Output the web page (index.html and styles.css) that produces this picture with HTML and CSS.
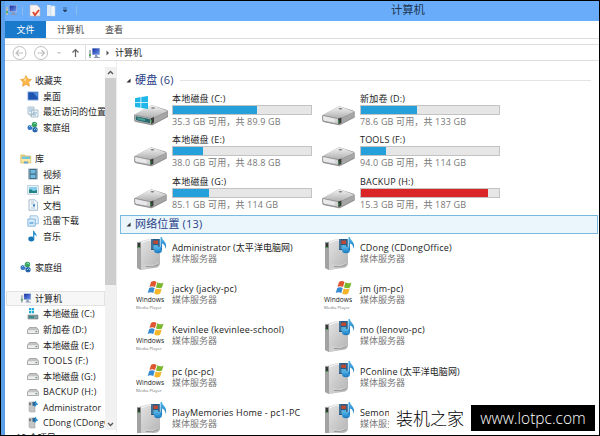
FILE: index.html
```html
<!DOCTYPE html>
<html lang="zh-CN">
<head>
<meta charset="utf-8">
<title>计算机</title>
<link rel="stylesheet" href="styles.css">
</head>
<body>
<svg width="0" height="0" class="defs">
  <defs>
    <linearGradient id="metal" x1="0" y1="0" x2="0" y2="1"><stop offset="0" stop-color="#f2f2f2"/><stop offset="1" stop-color="#adadad"/></linearGradient>
    <linearGradient id="front" x1="0" y1="0" x2="1" y2="1"><stop offset="0" stop-color="#fafafa"/><stop offset="1" stop-color="#c2c2c2"/></linearGradient>
    <linearGradient id="tower" x1="0" y1="0" x2="1" y2="1"><stop offset="0" stop-color="#e8e8e8"/><stop offset="1" stop-color="#b2b2b2"/></linearGradient>
    <linearGradient id="screen" x1="0" y1="0" x2="1" y2="1"><stop offset="0" stop-color="#122c9d"/><stop offset="1" stop-color="#729af0"/></linearGradient>
    <linearGradient id="bluenote" x1="0" y1="0" x2="0" y2="1"><stop offset="0" stop-color="#54b9ec"/><stop offset="1" stop-color="#1876bd"/></linearGradient>
  </defs>
  <symbol id="pc" viewBox="0 0 13 12"><path d="M1 3h2v8H1z" fill="#aebac0"/><path d="M1 7h2v2H1z" fill="#5aa95c"/><path d="M4 1h8v7H4z" fill="#c0cde3"/><path d="M4.500 1.500h7v6h-7z" fill="url(#screen)"/><path d="M7 8h2l1 2h2v1H6v-1h1z" fill="#8b99b6"/></symbol>
  <symbol id="star" viewBox="0 0 12 12"><path d="M6 .7 7.600 4l3.800.5-2.800 2.700.8 4L6 9.300l-3.400 1.900.7-4L.6 4.500 4.400 4z" fill="#ffb647" stroke="#e9a035" stroke-width=".8"/><path d="M6 2.500v4L3.500 5z" fill="#ffe2a0"/></symbol>
  <symbol id="desk" viewBox="0 0 12 12"><path d="M.5 1.500h11v9H.5z" fill="#84a6dc"/><path d="M1.300 2.300h9.500v7.300H1.300z" fill="#1c53b0"/><path d="M6 2.300h4.800v5.500z" fill="#4e89d8"/></symbol>
  <symbol id="recent" viewBox="0 0 12 12"><path d="M1 1h6v7H1zM5 4h6v7H4z" fill="#edf4f8" stroke="#9bb2c1" stroke-width=".8"/><path d="M2 3h4M2 5h3M6 7h4M6 9h3" stroke="#89b3d0"/><path d="m2 8 2 2 3-3" fill="none" stroke="#9fb4bd"/></symbol>
  <symbol id="home" viewBox="0 0 12 12"><circle cx="3" cy="6.500" r="2.500" fill="#3977c6"/><circle cx="7.500" cy="3.500" r="2.700" fill="#34a45c"/><circle cx="8" cy="8.700" r="2.600" fill="#2565ad"/><path d="m2 6 1.500-1.500L5 6M6.500 3 8 2l1.500 1.500M7 9l1.500-1.500L10 9" fill="none" stroke="#a8dfcf" stroke-width=".8"/></symbol>
  <symbol id="library" viewBox="0 0 12 12"><path d="M.8 2h4l1 1h5v7H.8z" fill="#efd879" stroke="#caac50" stroke-width=".6"/><path d="M2 3.500h8V7H2z" fill="#72c5dc"/><path d="M1 6h10l-1 4-2-2H4l-2 2z" fill="#f8e9a4"/><path d="M4 8.500h4v2H4z" fill="#6ba8d5"/></symbol>
  <symbol id="video" viewBox="0 0 12 12"><path d="M1.500.7h9v10.600h-9z" fill="#416c84"/><path d="M3.500 2h5v3.500h-5zm0 4.700h5V10h-5z" fill="#71b9dd"/><path d="M2.300 1.500v9M9.700 1.500v9" stroke="#d9eaf0" stroke-width=".8" stroke-dasharray="1 1"/></symbol>
  <symbol id="photo" viewBox="0 0 12 12"><path d="M.7 1.600h10.600v8.700H.7z" fill="#f4f9fc" stroke="#9db8ca" stroke-width=".7"/><path d="M2 3h8v6H2z" fill="#85cdec"/><path d="M2 6q2-2 4 1l4-1v3H2z" fill="#218483"/></symbol>
  <symbol id="doc" viewBox="0 0 12 12"><path d="M2 .8h6l2.500 2.500v8H2z" fill="#f0f6fa" stroke="#94afc5" stroke-width=".8"/><path d="M4 3h3M4 5h4M4 9h4" stroke="#b0c7da"/><path d="M6 5.500h2v2H6z" fill="#347ab7"/></symbol>
  <symbol id="download" viewBox="0 0 12 12"><path d="M3 .8h7l1.300 2v6H3z" fill="#e2f1fb" stroke="#8bb8dc" stroke-width=".8"/><path d="M.8 4h7.500v7.200H.8z" fill="#d4eafa" stroke="#79abd6" stroke-width=".8"/><path d="M2.500 7h4v2h-4z" fill="#7eb5e2"/></symbol>
  <symbol id="note" viewBox="0 0 12 12"><ellipse cx="4.300" cy="9" rx="3" ry="2.400" fill="#1675b5"/><path d="M6 9V.7h1.200C7.300 3 10.500 3.500 9.500 7 9 5 7.500 4.800 7.300 4.500V9z" fill="#2992ce"/></symbol>
  <symbol id="smalldrive" viewBox="0 0 12 12"><path d="M2.500 3.500h7l2 2.500v3.500h-11V6z" fill="#c3c3c3" stroke="#909090" stroke-width=".7"/><path d="M1 6.300h10V9H1z" fill="#eee"/><path d="M8.500 7h1.700v1.200H8.500z" fill="#6b8d6b"/></symbol>
  <symbol id="osdrive" viewBox="0 0 12 12"><path d="M2 0h2v2.300H2zm2.600 0H7v2.300H4.600zM2 3h2v2.300H2zm2.600 0H7v2.300H4.600z" fill="#17abd8"/><path d="M1 7h10v4H1z" fill="#829e9f" stroke="#747d80" stroke-width=".6"/><path d="M2 8h5v2H2z" fill="#398a8c"/></symbol>
  <symbol id="smallserver" viewBox="0 0 12 12"><path d="M2 1h4l2 1v9H3L2 10z" fill="#c5c5c5" stroke="#999" stroke-width=".5"/><path d="M2.400 2h1.200v2H2.400z" fill="#444"/><path d="M5.500.8h3v4h-3z" fill="#31658f"/><path d="M9 0q0 2 2 3-.5 2-2 1v1q-1.500 1.500-2 0 0-1 1-1V0z" fill="#2991cb"/></symbol>
  <symbol id="drive" viewBox="0 0 36 22"><path d="M1 11 18 1.500q1-.5 2 0L34 6q1.200.5 1 2v5L20 21q-1 .5-2.500 0L3 18q-2-.5-2-2z" fill="#929292"/><path d="M1.500 10.500 18 1.500l2 0L34.500 7 19 14.500z" fill="url(#metal)"/><path d="M1.500 11 18.500 14.500v5.800L3 17q-1.500-.5-1.500-2z" fill="url(#front)" stroke="#858585" stroke-width=".7"/><path d="m20 14.700 14.500-7V12L20 20z" fill="#a6a6a6"/><path d="M3 12.500 14 15v3L4 16z" fill="#e9e9ed"/><path d="m17.500 14.500 3.500-1.500v5.500l-3 1.500z" fill="#353c35"/><path d="M18.300 16v2.500" stroke="#38a04b" stroke-width="1"/><ellipse cx="20" cy="4" rx="2" ry=".8" fill="#777"/></symbol>
  <symbol id="windrive" viewBox="0 0 36 30"><use href="#drive" y="8" width="36" height="22"/><path d="M2.500 20 17 23v4.300L4 24.500q-1.500-.5-1.500-1.500z" fill="#2d6a70"/><path d="M4 21.500 12 23v2l-7-1.500z" fill="#4ba193"/><path d="M2 2.200 7.500 1v5H2zm6.300-1.300L15 0v6H8.300zM2 6.800h5.500v5L2 11zm6.300 0H15V13l-6.700-1z" fill="#20b6e8"/></symbol>
  <symbol id="server" viewBox="0 0 31 34"><path d="M1 5 13 2l11 4v21q-1 4-6 4l-13 2-4-2z" fill="url(#tower)"/><path d="M1 5h4v28l-4-2z" fill="#a2a2a2"/><path d="M1.700 6h2.500v5H1.700z" fill="#343834"/><path d="M1.700 10h2.500v1H1.700z" fill="#4d9f53"/><path d="M5 6 13 3l10 4" fill="none" stroke="#f5f5f5"/><path d="M5 25q10 6 18 0-3 5-9 6l-9 2z" fill="#cecece"/><path d="M10 29.500q7 1.500 12-2" fill="none" stroke="#888" stroke-width=".8"/><path d="M15 2h9v11h-9z" fill="#255b87"/><path d="M17.300 3.500H22V7h-4.700z" fill="#b84a36"/><path d="M17.300 8H22v4h-4.700z" fill="#58add9"/><path d="M16 2.500v10M23.300 2.500v10" stroke="#cbdbe3" stroke-width=".7" stroke-dasharray="1 1"/><ellipse cx="22" cy="13" rx="4" ry="3.200" fill="url(#bluenote)"/><path d="M24.500 0H26c.2 4 6 5 3.500 12 0-4-2-5-3.500-5.500V13h-1.500z" fill="url(#bluenote)"/></symbol>
  <symbol id="flag" viewBox="0 0 17 15"><path d="M4 2q3-2 5.500 0L8 7Q5 5.500 2.500 7z" fill="#df562f"/><path d="M10.300 2.300q3 2 6.200.2L15 7.500q-3 1.500-6 0z" fill="#79b82e"/><path d="M2.200 8Q5 6.500 7.700 8l-1.400 5Q3.500 11.500.7 13z" fill="#378bd1"/><path d="M8.700 8.500q3 1.500 6 0l-1.500 5q-3 2-6 0z" fill="#f4b52b"/></symbol>
</svg>
<div class="window">
  <header class="titlebar">
    <div class="quick">
      <svg class="i13"><use href="#pc"/></svg><i class="sep s1"></i>
      <svg class="props" viewBox="0 0 12 13"><path d="M1 1h7l3 3v8H1z" fill="#f9f4f2" stroke="#c4b6b9" stroke-width=".6"/><path d="m4 8 2 3 4-5" fill="none" stroke="#dd4d35" stroke-width="2"/></svg>
      <svg class="newf" viewBox="0 0 10 13"><path d="M1 1h4v11H1z" fill="#dbe8f5"/><path d="M5 2h4v10H5z" fill="#f2f6fa" stroke="#c0d5e9" stroke-width=".6"/></svg>
      <svg class="drop" viewBox="0 0 6 6"><path d="M1 1h4M1 3h4L3 5z" fill="#223954" stroke="#223954" stroke-width=".6"/></svg><i class="sep"></i>
    </div>
    <h1>计算机</h1>
  </header>
  <nav class="tabs"><span class="tab file">文件</span><span class="tab">计算机</span><span class="tab">查看</span></nav>
  <div class="address">
    <svg class="nav" viewBox="0 0 80 16"><g fill="none" stroke="#bfbfbf"><circle cx="14.500" cy="8" r="6.500"/><circle cx="36" cy="8" r="6.500"/><path d="M18 8h-7m3-3-3 3 3 3M32.500 8h7m-3-3 3 3-3 3" stroke-width="1.200"/></g><path d="m52.500 7 1.500 1.500L55.500 7" fill="none" stroke="#aaa"/><path d="M70.500 12V4.500m-3 3 3-3 3 3" fill="none" stroke="#666" stroke-width="1.200"/></svg>
    <div class="crumb"><svg class="i13"><use href="#pc"/></svg><svg class="chev" viewBox="0 0 4 6"><path d="m.5.500 2.500 2.500-2.500 2.500z" fill="#555"/></svg><span>计算机</span></div>
  </div>
  <div class="body">
    <aside>
      <div class="tree">
        <div class="row"><svg><use href="#star"/></svg><b>收藏夹</b></div>
        <div class="row sub"><svg><use href="#desk"/></svg><b>桌面</b></div>
        <div class="row sub"><svg><use href="#recent"/></svg><b>最近访问的位置</b></div>
        <div class="row sub"><svg><use href="#home"/></svg><b>家庭组</b></div>
        <div class="row"></div>
        <div class="row"><svg><use href="#library"/></svg><b>库</b></div>
        <div class="row sub"><svg><use href="#video"/></svg><b>视频</b></div>
        <div class="row sub"><svg><use href="#photo"/></svg><b>图片</b></div>
        <div class="row sub"><svg><use href="#doc"/></svg><b>文档</b></div>
        <div class="row sub"><svg><use href="#download"/></svg><b>迅雷下载</b></div>
        <div class="row sub"><svg><use href="#note"/></svg><b>音乐</b></div>
        <div class="row"></div>
        <div class="row"><svg><use href="#home"/></svg><b>家庭组</b></div>
        <div class="row"></div>
        <div class="row current"><svg><use href="#pc"/></svg><b>计算机</b></div>
        <div class="row sub"><svg><use href="#osdrive"/></svg><b>本地磁盘 (C:)</b></div>
        <div class="row sub"><svg><use href="#smalldrive"/></svg><b>新加卷 (D:)</b></div>
        <div class="row sub"><svg><use href="#smalldrive"/></svg><b>本地磁盘 (E:)</b></div>
        <div class="row sub"><svg><use href="#smalldrive"/></svg><b class="latin">TOOLS (F:)</b></div>
        <div class="row sub"><svg><use href="#smalldrive"/></svg><b>本地磁盘 (G:)</b></div>
        <div class="row sub"><svg><use href="#smalldrive"/></svg><b class="latin">BACKUP (H:)</b></div>
        <div class="row sub"><svg><use href="#smallserver"/></svg><b>Administrator</b></div>
        <div class="row sub"><svg><use href="#smallserver"/></svg><b>CDong (CDongOffice)</b></div>
      </div>
      <div class="scroll"><svg viewBox="0 0 11 11"><path d="M3 7l2.500-2.500L8 7" fill="none" stroke="#555" stroke-width="1.300"/></svg><i></i><svg class="down" viewBox="0 0 11 11"><path d="M3 4l2.500 2.500L8 4" fill="none" stroke="#555" stroke-width="1.300"/></svg></div>
    </aside>
    <main>
      <h2><svg viewBox="0 0 6 6"><path d="M5.500.500v5h-5z" fill="#333"/></svg><span>硬盘 (6)</span><hr></h2>
      <section class="grid">
        <div class="item"><svg class="big"><use href="#windrive"/></svg><div class="info"><p>本地磁盘 (C:)</p><div class="bar"><i style="width:61%"></i></div><small>35.3 GB 可用，共 89.9 GB</small></div></div>
        <div class="item"><svg class="dr"><use href="#drive"/></svg><div class="info"><p>新加卷 (D:)</p><div class="bar"><i style="width:40.500%"></i></div><small>78.6 GB 可用，共 133 GB</small></div></div>
        <div class="item"><svg class="dr"><use href="#drive"/></svg><div class="info"><p>本地磁盘 (E:)</p><div class="bar"><i style="width:22%"></i></div><small>38.0 GB 可用，共 48.8 GB</small></div></div>
        <div class="item"><svg class="dr"><use href="#drive"/></svg><div class="info"><p>TOOLS (F:)</p><div class="bar"><i style="width:18%"></i></div><small>94.0 GB 可用，共 114 GB</small></div></div>
        <div class="item"><svg class="dr"><use href="#drive"/></svg><div class="info"><p>本地磁盘 (G:)</p><div class="bar"><i style="width:26%"></i></div><small>85.1 GB 可用，共 114 GB</small></div></div>
        <div class="item"><svg class="dr"><use href="#drive"/></svg><div class="info"><p>BACKUP (H:)</p><div class="bar full"><i style="width:92%"></i></div><small>15.3 GB 可用，共 187 GB</small></div></div>
      </section>
      <h2 class="selected"><svg viewBox="0 0 6 6"><path d="M5.500.500v5h-5z" fill="#333"/></svg><span>网络位置 (13)</span></h2>
      <section class="grid net">
        <div class="item"><svg class="srv"><use href="#server"/></svg><div class="info"><p class="mixed">Administrator (太平洋电脑网)</p><small>媒体服务器</small></div></div>
        <div class="item"><svg class="srv"><use href="#server"/></svg><div class="info"><p>CDong (CDongOffice)</p><small>媒体服务器</small></div></div>
        <div class="item"><div class="wmp"><svg><use href="#flag"/></svg><span>Windows</span><em>Media Player</em></div><div class="info"><p>jacky (jacky-pc)</p><small>媒体服务器</small></div></div>
        <div class="item"><div class="wmp"><svg><use href="#flag"/></svg><span>Windows</span><em>Media Player</em></div><div class="info"><p>jm (jm-pc)</p><small>媒体服务器</small></div></div>
        <div class="item"><div class="wmp"><svg><use href="#flag"/></svg><span>Windows</span><em>Media Player</em></div><div class="info"><p>Kevinlee (kevinlee-school)</p><small>媒体服务器</small></div></div>
        <div class="item"><svg class="srv"><use href="#server"/></svg><div class="info"><p>mo (lenovo-pc)</p><small>媒体服务器</small></div></div>
        <div class="item"><div class="wmp"><svg><use href="#flag"/></svg><span>Windows</span><em>Media Player</em></div><div class="info"><p>pc (pc-pc)</p><small>媒体服务器</small></div></div>
        <div class="item"><svg class="srv"><use href="#server"/></svg><div class="info"><p class="mixed">PConline (太平洋电脑网)</p><small>媒体服务器</small></div></div>
        <div class="item"><svg class="srv"><use href="#server"/></svg><div class="info"><p>PlayMemories Home - pc1-PC</p><small>媒体服务器</small></div></div>
        <div class="item"><svg class="srv"><use href="#server"/></svg><div class="info"><p>Semon</p><small>媒体服务器</small></div></div>
      </section>
    </main>
  </div>
  <footer>19 个项目</footer>
</div>
<div class="watermark"><span>装机之家</span><b>www.lotpc.com</b></div>
</body>
</html>
```
FILE: styles.css
```css
* { box-sizing: border-box; margin: 0; padding: 0; }
body { width: 600px; height: 436px; overflow: hidden; position: relative; background: #000; font: 9px/12px "Open Sans", "Noto Sans CJK SC", sans-serif; color: #222; }
.defs { position: absolute; }
svg { display: block; flex: none; }
.window { width: 598px; height: 434px; margin: 1px; border-left: 4px solid #5a9fe8; background: #fff; overflow: hidden; display: flex; flex-direction: column; }
.titlebar { flex: none; height: 20px; margin-left: -4px; background: #69acf9; display: flex; align-items: center; }
.quick { display: flex; align-items: center; width: 390px; padding-left: 4px; height: 16px; margin-top: -2px; }
.i13 { width: 13px; height: 12px; }
.sep { width: 1px; height: 9px; background: #8dbbed; }
.sep.s1 { margin: 0 6px 0 4px; }
.props { width: 12px; height: 13px; margin-right: 5px; }
.newf { width: 10px; height: 13px; margin-right: 6px; }
.drop { width: 6px; height: 6px; margin-right: 8px; }
h1 { font-size: 11.300px; font-weight: 400; line-height: 16px; color: #1c3450; margin-top: -3px; }
.tabs { flex: none; height: 18px; border-bottom: 1px solid #dcdcdc; display: flex; line-height: 17px; }
.tab { color: #444; margin-right: 21px; }
.tab.file { width: 41px; height: 17px; background: #1979ca; color: #fff; text-align: center; margin-right: 11px; }
.address { flex: none; height: 17px; margin-top: 5px; border-top: 1px solid #dedede; border-bottom: 1px solid #dedede; display: flex; }
.nav { width: 80px; height: 16px; }
.crumb { flex: 1; border-left: 1px solid #dedede; display: flex; align-items: center; padding-left: 2px; }
.crumb span { line-height: 14px; margin-left: -1px; }
.chev { width: 4px; height: 6px; margin: 0 6px 0 5px; }
.body { flex: none; height: 372px; display: flex; overflow: hidden; }
aside { width: 112px; display: flex; border-right: 1px solid #eee; }
.tree { width: 101px; padding-top: 12px; overflow: hidden; }
.row { height: 15.550px; display: flex; align-items: center; gap: 3px; padding-left: 15px; white-space: nowrap; }
.row.sub { padding-left: 22px; gap: 4px; }
.row svg { width: 12px; height: 12px; }
.row b { font-weight: 400; line-height: 15px; }
.latin { letter-spacing: .2px; }
.row.current { background: #f7f7f7; border: 1px solid #e2e2e2; padding-left: 13px; margin-left: 1px; }
.scroll { width: 11px; margin-top: 6px; background: #f1f1f1; display: flex; flex-direction: column; height: 363px; }
.scroll svg { width: 11px; height: 11px; }
.scroll i { height: 207px; background: #cdcdcd; }
.scroll .down { margin-top: auto; }
main { flex: 1; padding: 10px 0 0 3px; min-width: 0; }
h2 { height: 18px; display: flex; align-items: center; padding-left: 6px; font-size: 11px; font-weight: 400; color: #283d86; line-height: 16px; letter-spacing: .15px; }
h2 svg { width: 5px; height: 5px; margin-right: 4px; }
h2 hr { flex: 1; border: 0; height: 1px; background: #e4e4e4; margin: 0 8px 0 6px; }
h2.selected { height: 19px; width: 478px; background: #eaf6fc; border: 1px solid #79b9dc; padding-left: 5px; }
.grid { display: grid; grid-template-columns: 188px 188px; grid-auto-rows: 41.400px; padding: 3px 0 0 13px; height: 125.500px; }
.item { display: flex; }
.dr { width: 35px; height: 21px; margin: 13px 4px 0 0; }
.big { width: 36px; height: 30px; margin: 4px 3px 0 0; }
.info { white-space: nowrap; }
.info p { height: 13px; line-height: 13px; letter-spacing: .2px; }
.info .mixed { letter-spacing: .05px; }
.bar { width: 140px; height: 10px; border: 1px solid #c3c3c3; background: #e6e6e6; }
.bar i { display: block; height: 8px; background: #26a0da; }
.bar.full i { background: #da2626; }
small { display: block; font-size: 9px; color: #777; line-height: 12px; margin-top: 1px; letter-spacing: .15px; }
.net { padding: 7px 0 0 16px; height: 220px; }
.net small { margin-top: -1px; letter-spacing: 0; }
.net .info p:not(.mixed) { letter-spacing: .18px; }
.srv { width: 31px; height: 34px; margin: -4px 5px 0 0; }
.wmp { width: 30px; height: 29px; margin: 0 6px 0 0; display: flex; flex-direction: column; }
.wmp svg { width: 17px; height: 15px; margin: -2px 0 0 11px; }
.wmp span { font-size: 6.600px; line-height: 9px; }
.wmp em { font-style: normal; font-size: 4.300px; line-height: 6px; color: #777; }
footer { flex: none; height: 12px; padding-left: 11px; line-height: 10px; }
.watermark { position: absolute; left: 389px; top: 405px; width: 206px; height: 26px; display: flex; align-items: center; background: #fff; }
.watermark span { width: 82px; padding-left: 7px; font: 300 17px/26px "Noto Sans CJK SC", sans-serif; color: #000; }
.watermark b { flex: 1; text-align: center; font: 300 15.500px/26px "Open Sans", sans-serif; color: #fff; background: #000; }
```
